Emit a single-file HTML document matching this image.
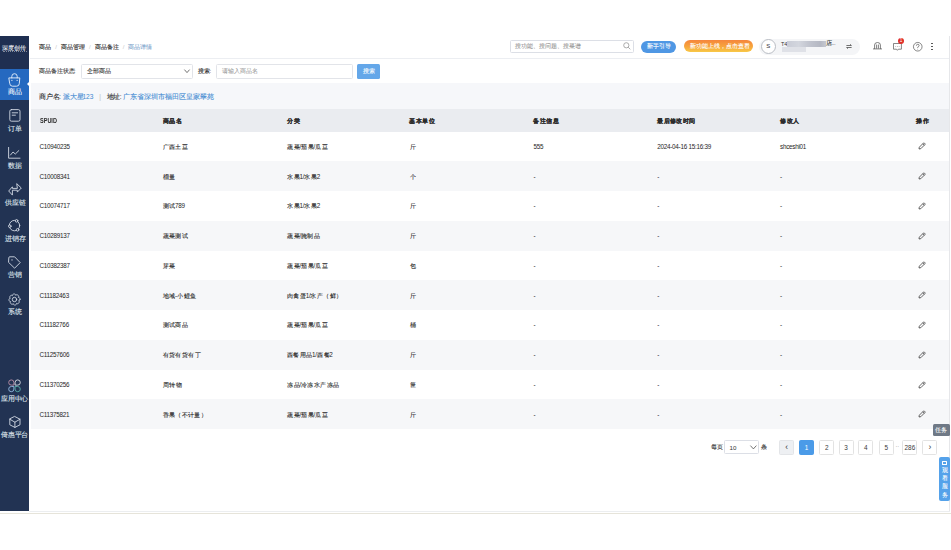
<!DOCTYPE html><html><head><meta charset="utf-8"><style>
*{box-sizing:border-box;margin:0;padding:0}
html,body{width:951px;height:550px;overflow:hidden;background:#fff;font-family:"Liberation Sans",sans-serif;color:#333}
.a{position:absolute;white-space:nowrap}
.nt{position:absolute;left:0;width:29px;text-align:center;font-size:6.6px;color:#dde2ea;line-height:7px;white-space:nowrap}
.bc{font-size:6px;line-height:7px;top:43.5px;color:#222}
.sep{color:#c8c8c8;margin:0 4px}
.cell{position:absolute;font-size:6.3px;line-height:7px;color:#262626;white-space:nowrap;letter-spacing:-0.25px}
.hd{font-weight:bold;color:#2a2a2a;letter-spacing:-0.35px}
.pg{position:absolute;top:440px;width:15px;height:14.5px;border:0.6px solid #e3e3e3;border-radius:1.5px;font-size:6.4px;line-height:13.3px;text-align:center;color:#3a3a3a;background:#fff}
svg{position:absolute;overflow:visible}
.c{font-style:normal;display:inline-block;text-align:justify;text-align-last:justify;white-space:nowrap;-webkit-text-stroke:var(--sw,0.6px) currentColor}
.c1{font-style:normal;display:inline-block;width:1em;text-align:center;-webkit-text-stroke:var(--sw,0.6px) currentColor}
.cjk .c,.cjk .c1{-webkit-text-stroke:calc(var(--sw,0.6px) * 0.17) currentColor}
</style></head><body>
<div class="a" style="left:0;top:36px;width:29px;height:475px;background:#223353"></div>
<div class="a" style="left:0;top:36px;width:29px;height:32.5px;background:#1f2f51"></div>
<div class="a" style="left:2px;top:44.5px;width:25px;font-size:5.9px;line-height:6px;color:#eef1f6;letter-spacing:-0.2px;--sw:0.5px"><i class="c" style="width:4em">深度创传</i></div>
<div class="a" style="left:2.5px;top:51.2px;width:24px;height:0;border-top:0.8px dotted #7d879b"></div>
<div class="a" style="left:0;top:68.5px;width:29px;height:31.5px;background:#2569c0"></div>
<div class="a" style="left:27px;top:82px;width:0;height:0;border-top:2.2px solid transparent;border-bottom:2.2px solid transparent;border-right:2.2px solid #fff"></div>
<svg style="left:8px;top:72.5px" width="13" height="14" viewBox="0 0 13 14"><path d="M3.8 4.9 V3.4 A2.7 2.7 0 0 1 9.2 3.4 V4.9" stroke="#e8f0fb" stroke-width="0.9" fill="none" stroke-linecap="round" stroke-linejoin="round"/><path d="M1.2 4.9 H11.8 L11.3 10.6 Q11.1 13.2 8.6 13.2 H4.4 Q1.9 13.2 1.7 10.6 Z" stroke="#e8f0fb" stroke-width="0.9" fill="none" stroke-linecap="round" stroke-linejoin="round"/><circle cx="3.9" cy="7.3" r="0.65" fill="#e8f0fb"/><circle cx="9.1" cy="7.3" r="0.65" fill="#e8f0fb"/></svg>
<div class="nt" style="--sw:0.7px;top:88px;color:#eef3fb"><i class="c" style="width:2em">商品</i></div>
<svg style="left:8.5px;top:108.8px" width="12" height="13" viewBox="0 0 12 13"><rect x="0.8" y="0.6" width="10.2" height="11.6" rx="1.6" stroke="#d3d9e4" stroke-width="0.9" fill="none" stroke-linecap="round" stroke-linejoin="round"/><path d="M3.2 3.8 H8.6 M3.2 6.2 H6.4" stroke="#d3d9e4" stroke-width="0.9" fill="none" stroke-linecap="round" stroke-linejoin="round"/></svg>
<div class="nt" style="--sw:0.7px;top:124.5px"><i class="c" style="width:2em">订单</i></div>
<svg style="left:8.3px;top:146.8px" width="13" height="12" viewBox="0 0 13 12"><path d="M0.6 0.4 V11.2 H12" stroke="#d3d9e4" stroke-width="0.9" fill="none" stroke-linecap="round" stroke-linejoin="round"/><path d="M2.5 8 L5 5 L7.3 7 L10.8 3.6" stroke="#d3d9e4" stroke-width="0.9" fill="none" stroke-linecap="round" stroke-linejoin="round"/></svg>
<div class="nt" style="--sw:0.7px;top:162px"><i class="c" style="width:2em">数据</i></div>
<svg style="left:7.5px;top:182.5px" width="14" height="13" viewBox="0 0 14 13"><path d="M9 0.9 L13.3 5 L9.3 9.1 L9.3 7.2 L4.4 7.2 L4.4 12.1 L0.7 8 L4.4 3.8 L4.4 5.4 L9 5.4 Z" stroke="#d3d9e4" stroke-width="0.9" fill="none" stroke-linecap="round" stroke-linejoin="round"/></svg>
<div class="nt" style="--sw:0.7px;top:198.5px"><i class="c" style="width:3em">供应链</i></div>
<svg style="left:7.8px;top:219.3px" width="13" height="13" viewBox="0 0 13 13"><circle cx="6.5" cy="6.6" r="5.2" stroke="#d3d9e4" stroke-width="0.9" fill="none" stroke-linecap="round" stroke-linejoin="round"/><circle cx="8.6" cy="1.8" r="1.3" fill="#223353" stroke="#d3d9e4" stroke-width="0.9" fill="none" stroke-linecap="round" stroke-linejoin="round"/><circle cx="1.8" cy="7.2" r="1.3" fill="#223353" stroke="#d3d9e4" stroke-width="0.9" fill="none" stroke-linecap="round" stroke-linejoin="round"/><circle cx="9.6" cy="10.8" r="1.3" fill="#223353" stroke="#d3d9e4" stroke-width="0.9" fill="none" stroke-linecap="round" stroke-linejoin="round"/></svg>
<div class="nt" style="--sw:0.7px;top:235px"><i class="c" style="width:3em">进销存</i></div>
<svg style="left:7.8px;top:255.8px" width="13" height="13" viewBox="0 0 13 13"><path d="M0.8 1.6 Q0.8 0.8 1.6 0.8 H6.6 L12.2 6.6 L6.6 12.2 L0.8 6.6 Z" stroke="#d3d9e4" stroke-width="0.9" fill="none" stroke-linecap="round" stroke-linejoin="round"/><circle cx="4" cy="3.9" r="0.7" fill="#d3d9e4"/></svg>
<div class="nt" style="--sw:0.7px;top:271px"><i class="c" style="width:2em">营销</i></div>
<svg style="left:7.8px;top:292.6px" width="13" height="13" viewBox="0 0 13 13"><path d="M12.00 6.50 L11.93 6.77 L11.82 7.02 L11.68 7.27 L11.48 7.49 L11.22 7.68 L10.71 7.78 L11.08 8.14 L11.19 8.44 L11.23 8.74 L11.22 9.02 L11.17 9.30 L11.07 9.56 L10.95 9.80 L10.79 10.02 L10.60 10.22 L10.39 10.39 L10.15 10.53 L9.89 10.64 L9.62 10.70 L9.32 10.72 L9.00 10.68 L8.57 10.38 L8.58 10.90 L8.44 11.19 L8.26 11.43 L8.05 11.62 L7.82 11.78 L7.57 11.90 L7.31 11.98 L7.04 12.02 L6.77 12.03 L6.50 12.00 L6.23 11.93 L5.98 11.82 L5.73 11.68 L5.51 11.48 L5.32 11.22 L5.22 10.71 L4.86 11.08 L4.56 11.19 L4.26 11.23 L3.98 11.22 L3.70 11.17 L3.44 11.07 L3.20 10.95 L2.98 10.79 L2.78 10.60 L2.61 10.39 L2.47 10.15 L2.36 9.89 L2.30 9.62 L2.28 9.32 L2.32 9.00 L2.62 8.57 L2.10 8.58 L1.81 8.44 L1.57 8.26 L1.38 8.05 L1.22 7.82 L1.10 7.57 L1.02 7.31 L0.98 7.04 L0.97 6.77 L1.00 6.50 L1.07 6.23 L1.18 5.98 L1.32 5.73 L1.52 5.51 L1.78 5.32 L2.29 5.22 L1.92 4.86 L1.81 4.56 L1.77 4.26 L1.78 3.98 L1.83 3.70 L1.93 3.44 L2.05 3.20 L2.21 2.98 L2.40 2.78 L2.61 2.61 L2.85 2.47 L3.11 2.36 L3.38 2.30 L3.68 2.28 L4.00 2.32 L4.43 2.62 L4.42 2.10 L4.56 1.81 L4.74 1.57 L4.95 1.38 L5.18 1.22 L5.43 1.10 L5.69 1.02 L5.96 0.98 L6.23 0.97 L6.50 1.00 L6.77 1.07 L7.02 1.18 L7.27 1.32 L7.49 1.52 L7.68 1.78 L7.78 2.29 L8.14 1.92 L8.44 1.81 L8.74 1.77 L9.02 1.78 L9.30 1.83 L9.56 1.93 L9.80 2.05 L10.02 2.21 L10.22 2.40 L10.39 2.61 L10.53 2.85 L10.64 3.11 L10.70 3.38 L10.72 3.68 L10.68 4.00 L10.38 4.43 L10.90 4.42 L11.19 4.56 L11.43 4.74 L11.62 4.95 L11.78 5.18 L11.90 5.43 L11.98 5.69 L12.02 5.96 L12.03 6.23 Z" stroke="#d3d9e4" stroke-width="0.9" fill="none" stroke-linecap="round" stroke-linejoin="round"/><circle cx="6.5" cy="6.5" r="2.2" stroke="#d3d9e4" stroke-width="0.9" fill="none" stroke-linecap="round" stroke-linejoin="round"/></svg>
<div class="nt" style="--sw:0.7px;top:308px"><i class="c" style="width:2em">系统</i></div>
<svg style="left:8px;top:378.5px" width="13" height="14" viewBox="0 0 13 14"><path d="M5.90 3.50 L5.90 6.10 L3.30 6.10 A2.60 2.60 0 1 1 5.90 3.50 Z" stroke="#b68aa2" stroke-width="0.95" fill="none"/><path d="M7.10 3.50 L7.10 6.10 L9.70 6.10 A2.60 2.60 0 1 0 7.10 3.50 Z" stroke="#d2d6de" stroke-width="0.95" fill="none"/><path d="M5.90 10.10 L5.90 7.50 L3.30 7.50 A2.60 2.60 0 1 0 5.90 10.10 Z" stroke="#8db2da" stroke-width="0.95" fill="none"/><path d="M7.10 10.10 L7.10 7.50 L9.70 7.50 A2.60 2.60 0 1 1 7.10 10.10 Z" stroke="#55a7a3" stroke-width="0.95" fill="none"/></svg>
<div class="nt" style="--sw:0.7px;top:394.5px;letter-spacing:-0.3px"><i class="c" style="width:4em">应用中心</i></div>
<svg style="left:8.6px;top:415.8px" width="12" height="12" viewBox="0 0 12 12"><path d="M5.9 0.6 L11 3.2 V8.8 L5.9 11.4 L0.8 8.8 V3.2 Z" stroke="#d3d9e4" stroke-width="0.9" fill="none" stroke-linecap="round" stroke-linejoin="round"/><path d="M0.8 3.2 L5.9 6.2 L11 3.2 M5.9 6.2 V11.4" stroke="#d3d9e4" stroke-width="0.9" fill="none" stroke-linecap="round" stroke-linejoin="round"/></svg>
<div class="nt" style="--sw:0.7px;top:431px;letter-spacing:-0.3px"><i class="c" style="width:4em">倚惠平台</i></div>
<div class="a" style="left:949px;top:36px;width:0.8px;height:475px;background:#e6e7ea"></div>
<div class="a" style="left:0;top:512.6px;width:951px;height:1px;background:#e6e4da"></div>
<div class="a" style="left:29px;top:510.6px;width:921px;height:0.8px;background:#eceef0"></div>
<div class="a" style="left:30px;top:58px;width:919px;height:0.6px;background:#eceef2"></div>
<div class="a bc" style="left:39.3px"><i class="c" style="width:2em">商品</i><span class="sep">/</span><i class="c" style="width:4em">商品管理</i><span class="sep">/</span><i class="c" style="width:4em">商品备注</i><span class="sep">/</span><span style="color:#86a9cf"><i class="c" style="width:4em">商品详情</i></span></div>
<div class="a" style="left:510px;top:40px;width:123.5px;height:12.5px;border:0.6px solid #dcdfe6;border-radius:1.5px;background:#fff"></div>
<div class="a" style="left:515px;top:42.9px;font-size:6px;line-height:7px;color:#8c8c8c;--sw:0.3px"><i class="c" style="width:11em">搜功能、搜问题、搜菜谱</i></div>
<svg style="left:623px;top:42px" width="8" height="8" viewBox="0 0 8 8"><circle cx="3.3" cy="3.3" r="2.6" stroke="#8a8a8a" stroke-width="0.7" fill="none"/><path d="M5.2 5.2 L7.3 7.3" stroke="#8a8a8a" stroke-width="0.7"/></svg>
<div class="a" style="left:641px;top:41px;width:35px;height:11.5px;border-radius:6px;background:#4f97e4;color:#fff;font-size:5.8px;line-height:11.5px;text-align:center"><i class="c" style="width:4em">新手引导</i></div>
<div class="a" style="left:683.8px;top:39.8px;width:69px;height:12.6px;border-radius:6.3px;background:linear-gradient(180deg,#f5853c,#f7a53c 55%,#f8c848);color:#fff;font-size:5.6px;line-height:13px;text-align:center"><i class="c" style="width:10em">新功能上线，点击查看</i></div>
<div class="a" style="left:759px;top:38.5px;width:101px;height:16px;border-radius:8px;background:#f4f5f7"></div>
<div class="a" style="left:760.8px;top:39px;width:15px;height:15px;border-radius:50%;border:0.7px solid #b9bdc4;background:#fff;font-size:6px;line-height:13.6px;text-align:center;color:#333">S</div>
<div class="a" style="left:781px;top:40.5px;font-size:5.5px;line-height:6px;color:#333">T4</div>
<div class="a" style="left:786.5px;top:40.8px;width:39.5px;height:6.2px;background:linear-gradient(90deg,#c9ccd6,#d3d6de 30%,#c2c5cf 55%,#b5b8c3 85%,#c5c8d0);filter:blur(0.5px)"></div>
<div class="a" style="left:825.5px;top:40.3px;font-size:5.8px;line-height:6px;color:#333;letter-spacing:-0.3px"><i class="c1">店</i>...</div>
<div class="a" style="left:782px;top:47.2px;width:23.5px;height:5px;background:#dfe1e7;filter:blur(0.6px)"></div>
<svg style="left:845.6px;top:43.8px" width="6" height="5" viewBox="0 0 6 5"><path d="M0.4 1.5 H5.4 L4 0.3 M5.6 3.5 H0.6 L2 4.7" stroke="#444" stroke-width="0.75" fill="none" stroke-linejoin="round"/></svg>
<svg style="left:873px;top:42.4px" width="9" height="7.5" viewBox="0 0 9 7.5"><path d="M1.6 6.6 V3 Q1.6 0.5 4.5 0.5 Q7.4 0.5 7.4 3 V6.6 M0.4 6.9 H8.6 M3.6 3 V6.2 M5.4 3 V6.2" stroke="#555" stroke-width="0.75" fill="none" stroke-linecap="round"/></svg>
<svg style="left:893px;top:43.2px" width="9" height="8" viewBox="0 0 9 8"><path d="M0.5 0.5 H8.4 V6.2 H5.3 L4.4 7.3 L3.5 6.2 H0.5 Z" stroke="#555" stroke-width="0.7" fill="none" stroke-linejoin="round"/><circle cx="2.8" cy="3.4" r="0.35" fill="#555"/><circle cx="4.45" cy="3.4" r="0.35" fill="#555"/><circle cx="6.1" cy="3.4" r="0.35" fill="#555"/></svg>
<div class="a" style="left:897.8px;top:37.8px;width:6.4px;height:6.4px;border-radius:50%;background:#e0302a;color:#fff;font-size:4.6px;line-height:6.4px;text-align:center">1</div>
<svg style="left:912.5px;top:42.1px" width="9.5" height="9.5" viewBox="0 0 9.5 9.5"><circle cx="4.75" cy="4.75" r="4.3" stroke="#555" stroke-width="0.7" fill="none"/><path d="M3.4 3.7 Q3.4 2.3 4.75 2.3 Q6.1 2.3 6.1 3.5 Q6.1 4.4 4.75 5 V5.8" stroke="#555" stroke-width="0.7" fill="none"/><circle cx="4.75" cy="7.1" r="0.4" fill="#555"/></svg>
<div class="a" style="left:931.3px;top:42.6px;width:1.5px;height:1.5px;border-radius:50%;background:#444"></div>
<div class="a" style="left:931.3px;top:45.5px;width:1.5px;height:1.5px;border-radius:50%;background:#444"></div>
<div class="a" style="left:931.3px;top:48.5px;width:1.5px;height:1.5px;border-radius:50%;background:#444"></div>
<div class="a" style="left:39.3px;top:67.5px;font-size:5.8px;line-height:7px;color:#333"><i class="c" style="width:6em">商品备注状态</i>:</div>
<div class="a" style="left:81.2px;top:64.1px;width:111.8px;height:14.6px;border:0.6px solid #e2e4e9;border-radius:1.5px;background:#fff"></div>
<div class="a" style="left:86.5px;top:68.2px;font-size:5.8px;line-height:7px;color:#333"><i class="c" style="width:4em">全部商品</i></div>
<svg style="left:184px;top:69.3px" width="6" height="4.5" viewBox="0 0 6 4.5"><path d="M0.4 0.6 L3 3.6 L5.6 0.6" stroke="#444" stroke-width="0.75" fill="none"/></svg>
<div class="a" style="left:198px;top:67.5px;font-size:5.8px;line-height:7px;color:#222"><i class="c" style="width:2em">搜索</i>:</div>
<div class="a" style="left:216.4px;top:64.1px;width:136.2px;height:14.6px;border:0.6px solid #e2e4e9;border-radius:1.5px;background:#fff"></div>
<div class="a" style="left:221.5px;top:68.2px;font-size:6px;line-height:7px;color:#9a9a9a;--sw:0.3px"><i class="c" style="width:6em">请输入商品名</i></div>
<div class="a" style="left:357.4px;top:64px;width:22.6px;height:14.8px;border-radius:1.5px;background:#64a7e9;color:#fff;font-size:5.6px;line-height:14.8px;text-align:center"><i class="c" style="width:2em">搜索</i></div>
<div class="a" style="left:30.5px;top:82.5px;width:918.5px;height:26.7px;background:#f6f7fa"></div>
<div class="a" style="left:39.3px;top:93.3px;font-size:6.6px;line-height:7px;color:#2a2a2a;letter-spacing:-0.05px"><i class="c" style="width:3em">商户名</i>: <span style="color:#3f8ad2"><i class="c" style="width:3em">派大星</i>123</span><span style="color:#bbb;margin:0 5.5px 0 6px">|</span><i class="c" style="width:2em">地址</i>: <span style="color:#3f8ad2"><i class="c" style="width:13em">广东省深圳市福田区皇家翠苑</i></span></div>
<div class="a" style="left:30.5px;top:109.2px;width:918.5px;height:22.4px;background:#eaecf0"></div>
<div class="cell hd" style="left:39.5px;top:116.6px;font-size:7px;letter-spacing:0;transform:scaleX(0.79);transform-origin:0 50%">SPUID</div>
<div class="cell hd" style="left:162.5px;top:117px"><i class="c" style="width:3em">商品名</i></div>
<div class="cell hd" style="left:286.8px;top:117px"><i class="c" style="width:2em">分类</i></div>
<div class="cell hd" style="left:409.4px;top:117px"><i class="c" style="width:4em">基本单位</i></div>
<div class="cell hd" style="left:533.4px;top:117px"><i class="c" style="width:4em">备注信息</i></div>
<div class="cell hd" style="left:657.2px;top:117px"><i class="c" style="width:6em">最后修改时间</i></div>
<div class="cell hd" style="left:780.0px;top:117px"><i class="c" style="width:3em">修改人</i></div>
<div class="cell hd" style="left:915.8px;top:117px"><i class="c" style="width:2em">操作</i></div>
<div class="cell" style="left:39.5px;top:142.80px">C10940235</div>
<div class="cell" style="left:162.5px;top:142.80px"><i class="c" style="width:4em">广西土豆</i></div>
<div class="cell" style="left:286.8px;top:142.80px"><i class="c" style="width:2em">蔬菜</i>/<i class="c" style="width:2em">茄果</i>/<i class="c" style="width:2em">瓜豆</i></div>
<div class="cell" style="left:409.4px;top:142.80px"><i class="c1">斤</i></div>
<div class="cell" style="left:533.4px;top:142.80px">555</div>
<div class="cell" style="left:657.2px;top:142.80px">2024-04-16 15:16:39</div>
<div class="cell" style="left:780.0px;top:142.80px">shceshi01</div>
<svg style="left:918.0px;top:142.4px" width="8" height="8" viewBox="0 0 8 8"><path d="M1 7 L1.3 5.2 L5.4 1.1 Q5.9 0.6 6.4 1.1 L6.9 1.6 Q7.4 2.1 6.9 2.6 L2.8 6.7 Z M4.7 1.8 L6.2 3.3" stroke="#333" stroke-width="0.75" fill="none" stroke-linejoin="round"/></svg>
<div class="a" style="left:30.5px;top:161.36px;width:918.5px;height:29.76px;background:#f6f7f9"></div>
<div class="cell" style="left:39.5px;top:172.56px">C10008341</div>
<div class="cell" style="left:162.5px;top:172.56px"><i class="c" style="width:2em">榴量</i></div>
<div class="cell" style="left:286.8px;top:172.56px"><i class="c" style="width:2em">水果</i>1/<i class="c" style="width:2em">水果</i>2</div>
<div class="cell" style="left:409.4px;top:172.56px"><i class="c1">个</i></div>
<div class="cell" style="left:533.4px;top:172.56px">-</div>
<div class="cell" style="left:657.2px;top:172.56px">-</div>
<div class="cell" style="left:780.0px;top:172.56px">-</div>
<svg style="left:918.0px;top:172.2px" width="8" height="8" viewBox="0 0 8 8"><path d="M1 7 L1.3 5.2 L5.4 1.1 Q5.9 0.6 6.4 1.1 L6.9 1.6 Q7.4 2.1 6.9 2.6 L2.8 6.7 Z M4.7 1.8 L6.2 3.3" stroke="#333" stroke-width="0.75" fill="none" stroke-linejoin="round"/></svg>
<div class="cell" style="left:39.5px;top:202.32px">C10074717</div>
<div class="cell" style="left:162.5px;top:202.32px"><i class="c" style="width:2em">测试</i>789</div>
<div class="cell" style="left:286.8px;top:202.32px"><i class="c" style="width:2em">水果</i>1/<i class="c" style="width:2em">水果</i>2</div>
<div class="cell" style="left:409.4px;top:202.32px"><i class="c1">斤</i></div>
<div class="cell" style="left:533.4px;top:202.32px">-</div>
<div class="cell" style="left:657.2px;top:202.32px">-</div>
<div class="cell" style="left:780.0px;top:202.32px">-</div>
<svg style="left:918.0px;top:201.9px" width="8" height="8" viewBox="0 0 8 8"><path d="M1 7 L1.3 5.2 L5.4 1.1 Q5.9 0.6 6.4 1.1 L6.9 1.6 Q7.4 2.1 6.9 2.6 L2.8 6.7 Z M4.7 1.8 L6.2 3.3" stroke="#333" stroke-width="0.75" fill="none" stroke-linejoin="round"/></svg>
<div class="a" style="left:30.5px;top:220.88px;width:918.5px;height:29.76px;background:#f6f7f9"></div>
<div class="cell" style="left:39.5px;top:232.08px">C10289137</div>
<div class="cell" style="left:162.5px;top:232.08px"><i class="c" style="width:4em">蔬菜测试</i></div>
<div class="cell" style="left:286.8px;top:232.08px"><i class="c" style="width:2em">蔬菜</i>/<i class="c" style="width:3em">腌制品</i></div>
<div class="cell" style="left:409.4px;top:232.08px"><i class="c1">斤</i></div>
<div class="cell" style="left:533.4px;top:232.08px">-</div>
<div class="cell" style="left:657.2px;top:232.08px">-</div>
<div class="cell" style="left:780.0px;top:232.08px">-</div>
<svg style="left:918.0px;top:231.7px" width="8" height="8" viewBox="0 0 8 8"><path d="M1 7 L1.3 5.2 L5.4 1.1 Q5.9 0.6 6.4 1.1 L6.9 1.6 Q7.4 2.1 6.9 2.6 L2.8 6.7 Z M4.7 1.8 L6.2 3.3" stroke="#333" stroke-width="0.75" fill="none" stroke-linejoin="round"/></svg>
<div class="cell" style="left:39.5px;top:261.84px">C10382387</div>
<div class="cell" style="left:162.5px;top:261.84px"><i class="c" style="width:2em">芽菜</i></div>
<div class="cell" style="left:286.8px;top:261.84px"><i class="c" style="width:2em">蔬菜</i>/<i class="c" style="width:2em">茄果</i>/<i class="c" style="width:2em">瓜豆</i></div>
<div class="cell" style="left:409.4px;top:261.84px"><i class="c1">包</i></div>
<div class="cell" style="left:533.4px;top:261.84px">-</div>
<div class="cell" style="left:657.2px;top:261.84px">-</div>
<div class="cell" style="left:780.0px;top:261.84px">-</div>
<svg style="left:918.0px;top:261.4px" width="8" height="8" viewBox="0 0 8 8"><path d="M1 7 L1.3 5.2 L5.4 1.1 Q5.9 0.6 6.4 1.1 L6.9 1.6 Q7.4 2.1 6.9 2.6 L2.8 6.7 Z M4.7 1.8 L6.2 3.3" stroke="#333" stroke-width="0.75" fill="none" stroke-linejoin="round"/></svg>
<div class="a" style="left:30.5px;top:280.40px;width:918.5px;height:29.76px;background:#f6f7f9"></div>
<div class="cell" style="left:39.5px;top:291.60px">C11182463</div>
<div class="cell" style="left:162.5px;top:291.60px"><i class="c" style="width:2em">地域</i>-<i class="c" style="width:3em">小鲤鱼</i></div>
<div class="cell" style="left:286.8px;top:291.60px"><i class="c" style="width:3em">肉禽蛋</i>1/<i class="c" style="width:5em">水产（鲜）</i></div>
<div class="cell" style="left:409.4px;top:291.60px"><i class="c1">斤</i></div>
<div class="cell" style="left:533.4px;top:291.60px">-</div>
<div class="cell" style="left:657.2px;top:291.60px">-</div>
<div class="cell" style="left:780.0px;top:291.60px">-</div>
<svg style="left:918.0px;top:291.2px" width="8" height="8" viewBox="0 0 8 8"><path d="M1 7 L1.3 5.2 L5.4 1.1 Q5.9 0.6 6.4 1.1 L6.9 1.6 Q7.4 2.1 6.9 2.6 L2.8 6.7 Z M4.7 1.8 L6.2 3.3" stroke="#333" stroke-width="0.75" fill="none" stroke-linejoin="round"/></svg>
<div class="cell" style="left:39.5px;top:321.36px">C11182766</div>
<div class="cell" style="left:162.5px;top:321.36px"><i class="c" style="width:4em">测试商品</i></div>
<div class="cell" style="left:286.8px;top:321.36px"><i class="c" style="width:2em">蔬菜</i>/<i class="c" style="width:2em">茄果</i>/<i class="c" style="width:2em">瓜豆</i></div>
<div class="cell" style="left:409.4px;top:321.36px"><i class="c1">桶</i></div>
<div class="cell" style="left:533.4px;top:321.36px">-</div>
<div class="cell" style="left:657.2px;top:321.36px">-</div>
<div class="cell" style="left:780.0px;top:321.36px">-</div>
<svg style="left:918.0px;top:321.0px" width="8" height="8" viewBox="0 0 8 8"><path d="M1 7 L1.3 5.2 L5.4 1.1 Q5.9 0.6 6.4 1.1 L6.9 1.6 Q7.4 2.1 6.9 2.6 L2.8 6.7 Z M4.7 1.8 L6.2 3.3" stroke="#333" stroke-width="0.75" fill="none" stroke-linejoin="round"/></svg>
<div class="a" style="left:30.5px;top:339.92px;width:918.5px;height:29.76px;background:#f6f7f9"></div>
<div class="cell" style="left:39.5px;top:351.12px">C11257606</div>
<div class="cell" style="left:162.5px;top:351.12px"><i class="c" style="width:6em">有货有货有丁</i></div>
<div class="cell" style="left:286.8px;top:351.12px"><i class="c" style="width:4em">西餐用品</i>1/<i class="c" style="width:2em">西餐</i>2</div>
<div class="cell" style="left:409.4px;top:351.12px"><i class="c1">斤</i></div>
<div class="cell" style="left:533.4px;top:351.12px">-</div>
<div class="cell" style="left:657.2px;top:351.12px">-</div>
<div class="cell" style="left:780.0px;top:351.12px">-</div>
<svg style="left:918.0px;top:350.7px" width="8" height="8" viewBox="0 0 8 8"><path d="M1 7 L1.3 5.2 L5.4 1.1 Q5.9 0.6 6.4 1.1 L6.9 1.6 Q7.4 2.1 6.9 2.6 L2.8 6.7 Z M4.7 1.8 L6.2 3.3" stroke="#333" stroke-width="0.75" fill="none" stroke-linejoin="round"/></svg>
<div class="cell" style="left:39.5px;top:380.88px">C11370256</div>
<div class="cell" style="left:162.5px;top:380.88px"><i class="c" style="width:3em">周转物</i></div>
<div class="cell" style="left:286.8px;top:380.88px"><i class="c" style="width:2em">冻品</i>/<i class="c" style="width:6em">冷冻水产冻品</i></div>
<div class="cell" style="left:409.4px;top:380.88px"><i class="c1">筐</i></div>
<div class="cell" style="left:533.4px;top:380.88px">-</div>
<div class="cell" style="left:657.2px;top:380.88px">-</div>
<div class="cell" style="left:780.0px;top:380.88px">-</div>
<svg style="left:918.0px;top:380.5px" width="8" height="8" viewBox="0 0 8 8"><path d="M1 7 L1.3 5.2 L5.4 1.1 Q5.9 0.6 6.4 1.1 L6.9 1.6 Q7.4 2.1 6.9 2.6 L2.8 6.7 Z M4.7 1.8 L6.2 3.3" stroke="#333" stroke-width="0.75" fill="none" stroke-linejoin="round"/></svg>
<div class="a" style="left:30.5px;top:399.44px;width:918.5px;height:29.76px;background:#f6f7f9"></div>
<div class="cell" style="left:39.5px;top:410.64px">C11375821</div>
<div class="cell" style="left:162.5px;top:410.64px"><i class="c" style="width:7em">香果（不计量）</i></div>
<div class="cell" style="left:286.8px;top:410.64px"><i class="c" style="width:2em">蔬菜</i>/<i class="c" style="width:2em">茄果</i>/<i class="c" style="width:2em">瓜豆</i></div>
<div class="cell" style="left:409.4px;top:410.64px"><i class="c1">斤</i></div>
<div class="cell" style="left:533.4px;top:410.64px">-</div>
<div class="cell" style="left:657.2px;top:410.64px">-</div>
<div class="cell" style="left:780.0px;top:410.64px">-</div>
<svg style="left:918.0px;top:410.2px" width="8" height="8" viewBox="0 0 8 8"><path d="M1 7 L1.3 5.2 L5.4 1.1 Q5.9 0.6 6.4 1.1 L6.9 1.6 Q7.4 2.1 6.9 2.6 L2.8 6.7 Z M4.7 1.8 L6.2 3.3" stroke="#333" stroke-width="0.75" fill="none" stroke-linejoin="round"/></svg>
<div class="a" style="left:710.5px;top:443.5px;font-size:5.6px;line-height:7px;color:#333"><i class="c" style="width:2em">每页</i></div>
<div class="a" style="left:724.3px;top:440px;width:34.3px;height:14.4px;border:0.6px solid #dcdfe6;border-radius:1.5px;background:#fff"></div>
<div class="a" style="left:729.5px;top:443.8px;font-size:6.2px;line-height:7px;color:#333">10</div>
<svg style="left:750px;top:444.6px" width="7" height="5" viewBox="0 0 7 5"><path d="M0.4 0.6 L3.4 3.9 L6.4 0.6" stroke="#444" stroke-width="0.75" fill="none"/></svg>
<div class="a" style="left:761px;top:443.5px;font-size:5.6px;line-height:7px;color:#333"><i class="c1">条</i></div>
<div class="pg" style="left:779.2px;background:#eef0f3;border-color:#e3e5e8;font-size:8.5px;line-height:12.8px">‹</div>
<div class="pg" style="left:799px;background:#4b9be8;border-color:#4b9be8;color:#fff">1</div>
<div class="pg" style="left:819.3px">2</div>
<div class="pg" style="left:838.6px">3</div>
<div class="pg" style="left:858.4px">4</div>
<div class="pg" style="left:878.7px">5</div>
<div class="pg" style="left:902.4px">286</div>
<div class="pg" style="left:922.3px;font-size:8.5px;line-height:12.8px">›</div>
<div class="a" style="left:895.5px;top:443px;font-size:5.5px;line-height:7px;color:#777">··</div>
<div class="a" style="left:933px;top:424px;width:16.5px;height:12.2px;border-radius:1.5px;background:#6f7986;color:#fff;font-size:5.8px;line-height:12.2px;text-align:center;--sw:0.5px"><i class="c" style="width:2em">任务</i></div>
<div class="a" style="left:938.8px;top:456.8px;width:11px;height:44px;border-radius:2px;background:#55a2ea"></div>
<div class="a" style="left:941.7px;top:460.5px;width:5px;height:4.6px;border:0.6px solid #fff;border-radius:0.6px"></div>
<div class="a" style="left:938.8px;top:466px;width:11px;font-size:5.6px;line-height:8.2px;color:#fff;text-align:center;--sw:0.4px"><i class="c1">观</i><br><i class="c1">看</i><br><i class="c1">服</i><br><i class="c1">务</i></div>
<script>(function(){var s=document.createElement("span");s.style.cssText="position:absolute;left:0;top:0;visibility:hidden;font-size:100px;font-family:'Liberation Sans',sans-serif;white-space:nowrap";s.textContent="\u5546\u54c1";document.body.appendChild(s);var w=s.getBoundingClientRect().width;document.body.removeChild(s);if(w>180){document.documentElement.className+=" cjk";}})();</script>
</body></html>
